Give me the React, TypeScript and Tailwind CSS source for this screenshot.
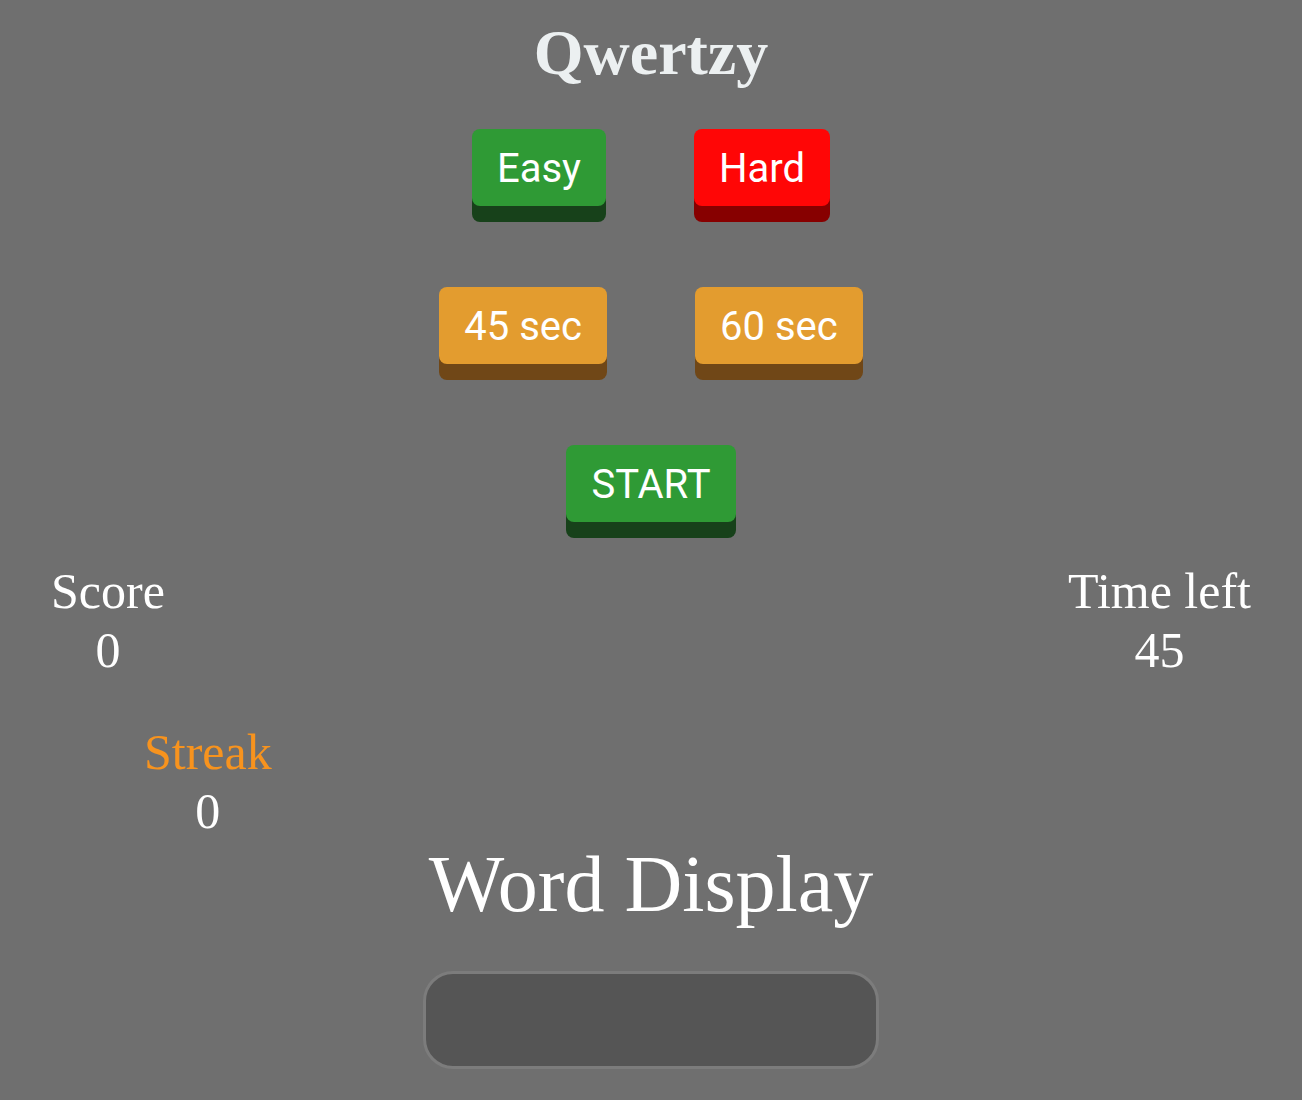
import { useState } from 'react';

const serif = { fontFamily: '"Liberation Serif", "Times New Roman", serif' };

type KeyProps = {
  label: string;
  face: string;
  onClick?: () => void;
};

function KeyButton({ label, face, onClick }: KeyProps) {
  return (
    <button
      onClick={onClick}
      className={`h-[77px] px-[25px] pt-[2px] rounded-[8px] text-white text-[40px] leading-none flex items-center justify-center ${face}`}
      style={{ fontFamily: 'Roboto, "Noto Sans", sans-serif' }}
    >
      {label}
    </button>
  );
}

function Stat({ label, value, tone = 'text-white' }: { label: string; value: number; tone?: string }) {
  return (
    <div className="flex flex-col items-center text-[50px] leading-[59px]" style={serif}>
      <span className={tone}>{label}</span>
      <span className="text-white">{value}</span>
    </div>
  );
}

export default function App() {
  const [time, setTime] = useState(45);
  const [word, setWord] = useState('');

  return (
    <div className="min-h-[1100px] w-full bg-[#6f6f6f] flex flex-col items-center">
      <h1
        className="mt-[16px] text-[64px] leading-[74px] font-bold text-[#ecf0f1]"
        style={serif}
      >
        Qwertzy
      </h1>

      {/* Difficulty */}
      <div className="mt-[39px] flex gap-[88px]">
        <KeyButton label="Easy" face="bg-[#2f9a35] shadow-[0_16px_0_#17411a]" />
        <KeyButton label="Hard" face="bg-[#ff0606] shadow-[0_16px_0_#870000]" />
      </div>

      {/* Duration */}
      <div className="mt-[81px] flex gap-[88px]">
        <KeyButton label="45 sec" face="bg-[#e39c2f] shadow-[0_16px_0_#704717]" onClick={() => setTime(45)} />
        <KeyButton label="60 sec" face="bg-[#e39c2f] shadow-[0_16px_0_#704717]" onClick={() => setTime(60)} />
      </div>

      <div className="mt-[81px]">
        <KeyButton label="START" face="bg-[#2f9a35] shadow-[0_16px_0_#17411a]" />
      </div>

      {/* Stats */}
      <div className="mt-[40px] w-full px-[51px] flex justify-between">
        <Stat label="Score" value={0} />
        <Stat label="Time left" value={time} />
      </div>

      <div className="mt-[43px] w-full pl-[144px]">
        <div className="inline-flex">
          <Stat label="Streak" value={0} tone="text-[#f7931e]" />
        </div>
      </div>

      <div className="text-[80px] leading-[86px] text-white" style={serif}>
        Word Display
      </div>

      <input
        value={word}
        onChange={(e) => setWord(e.target.value)}
        className="mt-[44px] w-[456px] h-[98px] rounded-[30px] border-[3px] border-[#7c7c7c] bg-[#555555] outline-none px-6 text-white text-[40px]"
        style={serif}
      />
    </div>
  );
}
